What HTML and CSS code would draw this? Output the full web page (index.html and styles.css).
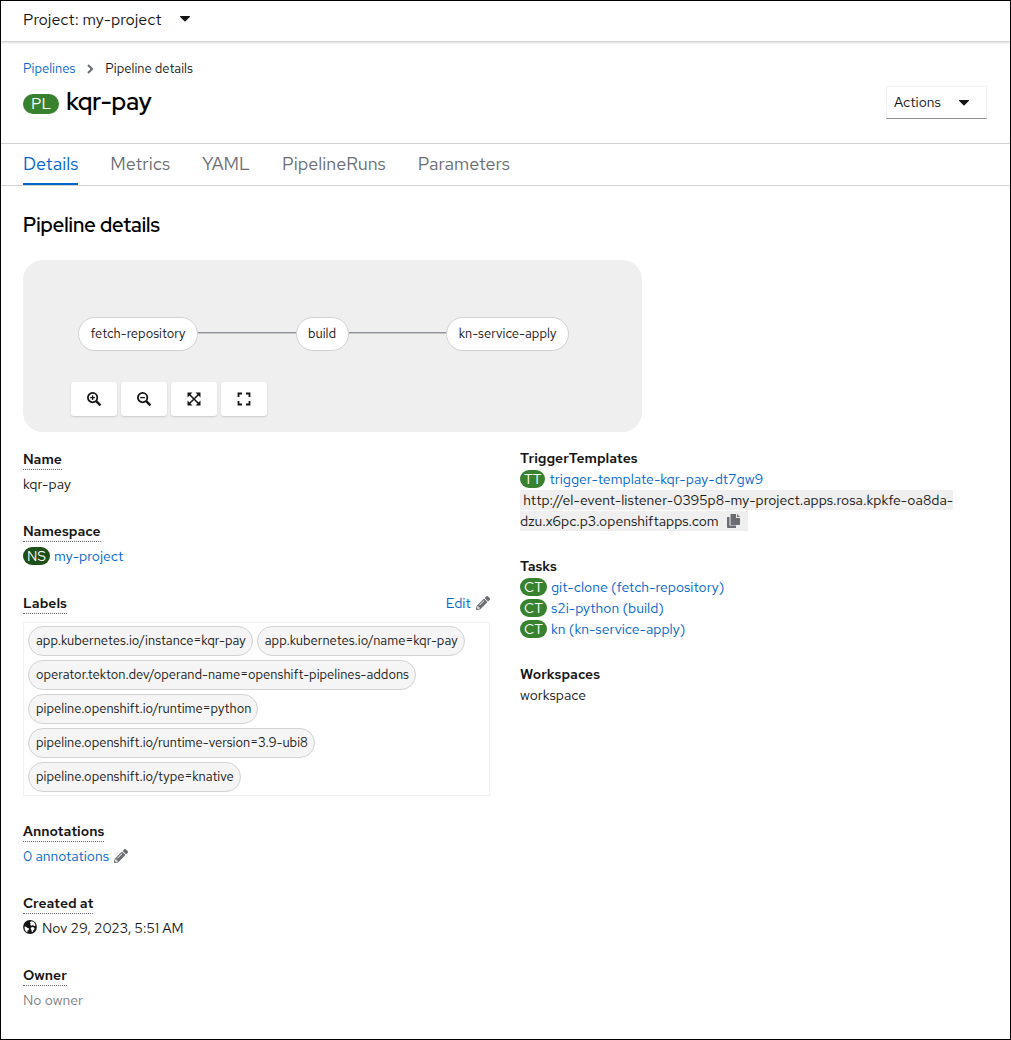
FILE: index.html
```html
<!DOCTYPE html>
<html lang="en">
<head>
  <meta charset="UTF-8">
  <meta name="viewport" content="width=device-width, initial-scale=1.0">
  <title>kqr-pay - Pipeline details</title>
  <link rel="stylesheet" href="styles.css">
</head>
<body>
  <!-- Shared icons -->
  <svg class="icon-defs" aria-hidden="true">
    <symbol id="caret" viewBox="0 0 10 6"><path d="M0.6 0h8.8c.6 0 .8.6.4 1L5.5 5.3c-.3.3-.7.3-1 0L.2 1C-.2.6 0 0 .6 0z"/></symbol>
    <symbol id="pencil" viewBox="0 0 512 512"><path d="M498 142l-47 47c-4 4-12 4-17 0L324 78c-5-5-5-12 0-17l46-46c19-19 49-19 68 0l60 60c19 18 19 49 0 67zM284 101L22 363 0 485c-3 16 11 30 28 27l121-21 263-263c5-4 5-12 0-17L301 101c-5-5-13-5-17 0zM124 340c-5-6-5-14 0-20l154-154c6-5 15-5 20 0s5 15 0 20L144 340c-6 5-14 5-20 0zm-36 84h48v36l-64 11-31-31 11-64h36z"/></symbol>
  </svg>

  <div class="page">
    <header class="project-bar">
      <button class="project-toggle">Project: my-project
        <svg class="caret"><use href="#caret"/></svg>
      </button>
    </header>

    <!-- Heading -->
    <div class="heading">
      <nav class="breadcrumb">
        <a href="#">Pipelines</a>
        <svg class="chevron" viewBox="0 0 6 10"><path d="M1 1l4 4-4 4"/></svg>
        <span>Pipeline details</span>
      </nav>
      <div class="title-row">
        <h1><span class="badge badge-lg">PL</span>kqr-pay</h1>
        <button class="actions">Actions <svg class="caret"><use href="#caret"/></svg></button>
      </div>
    </div>

    <nav class="tabs">
      <a class="active" href="#">Details</a>
      <a href="#">Metrics</a>
      <a href="#">YAML</a>
      <a href="#">PipelineRuns</a>
      <a href="#">Parameters</a>
    </nav>

    <main>
      <h2>Pipeline details</h2>

      <!-- Pipeline graph -->
      <div class="graph">
        <div class="nodes">
          <span class="node node-fetch">fetch-repository</span>
          <span class="edge"></span>
          <span class="node node-build">build</span>
          <span class="edge"></span>
          <span class="node node-apply">kn-service-apply</span>
        </div>
        <div class="toolbar">
          <button aria-label="Zoom in"><svg viewBox="0 0 14 14"><g fill="none" stroke="currentColor"><circle cx="5.6" cy="5.6" r="4.7" stroke-width="1.8"/><path d="M9.2 9.2l4.2 4.2" stroke-width="2.4"/><path d="M3.2 5.6h4.8M5.6 3.2v4.8" stroke-width="1.3"/></g></svg></button>
          <button aria-label="Zoom out"><svg viewBox="0 0 14 14"><g fill="none" stroke="currentColor"><circle cx="5.6" cy="5.6" r="4.7" stroke-width="1.8"/><path d="M9.2 9.2l4.2 4.2" stroke-width="2.4"/><path d="M3.2 5.6h4.8" stroke-width="1.3"/></g></svg></button>
          <button aria-label="Fit to screen"><svg viewBox="0 0 14 14"><path d="M.5 .5h5L.5 5.500zM13.500 .5v5L8.500 .5zM.5 13.500v-5l5 5zM13.500 13.500h-5l5-5z"/><path d="M2.500 2.500l9 9M11.500 2.500l-9 9" stroke="currentColor" stroke-width="1.500"/></svg></button>
          <button aria-label="Reset view"><svg viewBox="0 0 14 14"><path d="M1.500 5V1.500H5M9 1.500h3.500V5M12.500 9v3.500H9M5 12.500H1.500V9" fill="none" stroke="currentColor" stroke-width="1.800"/></svg></button>
        </div>
      </div>

      <div class="columns">
        <dl class="details">
          <dt><span>Name</span></dt>
          <dd>kqr-pay</dd>
          <dt><span>Namespace</span></dt>
          <dd><span class="badge badge-ns">NS</span><a href="#">my-project</a></dd>
          <dt><span>Labels</span><a class="edit" href="#">Edit <svg class="pencil"><use href="#pencil"/></svg></a></dt>
          <dd class="labels">
            <a href="#">app.kubernetes.io/instance=kqr-pay</a>
            <a href="#">app.kubernetes.io/name=kqr-pay</a>
            <a href="#">operator.tekton.dev/operand-name=openshift-pipelines-addons</a>
            <a href="#">pipeline.openshift.io/runtime=python</a>
            <a href="#">pipeline.openshift.io/runtime-version=3.9-ubi8</a>
            <a href="#">pipeline.openshift.io/type=knative</a>
          </dd>
          <dt><span>Annotations</span></dt>
          <dd><a href="#">0 annotations <svg class="pencil"><use href="#pencil"/></svg></a></dd>
          <dt><span>Created at</span></dt>
          <dd><svg class="globe" viewBox="0 0 14 14"><circle cx="7" cy="7" r="6.9"/><path fill="#fff" d="M6.800 2.200l1.800-1 2.200.9 1.300 1.900.3 1.900-1.400.2-1-1-1.300.6-1.600-.9.600-1.300zM1.500 6.600l1.500.2 1.600 1.200 1.500.6-.4 1.400-1.200.8-.2 1.400-1.400-.8-1.100-1.900zM8 7.600l1.800-.6 1.500.7.300 1.400-1.200 1.200-.8 1.600-1-.4-.2-1.700-.7-1z"/></svg>Nov 29, 2023, 5:51 AM</dd>
          <dt><span>Owner</span></dt>
          <dd class="muted">No owner</dd>
        </dl>

        <dl class="resources">
          <dt>TriggerTemplates</dt>
          <dd><span class="badge">TT</span><a href="#">trigger-template-kqr-pay-dt7gw9</a></dd>
          <dd><span class="url">&nbsp;http://el-event-listener-0395p8-my-project.apps.rosa.kpkfe-oa8da-<wbr>dzu.x6pc.p3.openshiftapps.com<button class="copy" aria-label="Copy to clipboard"><svg viewBox="0 0 14 14"><path d="M0 3h2.500v8.500H9V14H1c-.6 0-1-.4-1-1z"/><path d="M3.500 0H9v4h4v6c0 .6-.4 1-1 1H4.500c-.6 0-1-.4-1-1zM10 0l3 3h-3z"/></svg></button></span></dd>
          <dt>Tasks</dt>
          <dd><span class="badge">CT</span><a href="#">git-clone (fetch-repository)</a></dd>
          <dd><span class="badge">CT</span><a href="#">s2i-python (build)</a></dd>
          <dd><span class="badge">CT</span><a href="#">kn (kn-service-apply)</a></dd>
          <dt>Workspaces</dt>
          <dd>workspace</dd>
        </dl>
      </div>
    </main>
  </div>
</body>
</html>
```
FILE: styles.css
```css
* {
  box-sizing: border-box;
}

body {
  margin: 0;
  font-family: "Red Hat Text", Roboto, sans-serif;
  font-size: 14px;
  line-height: 21px;
  color: #151515;
  background: #fff;
}

a {
  color: #06c;
  text-decoration: none;
}

button {
  font: inherit;
  color: inherit;
  background: #fff;
  border: none;
  padding: 0;
  cursor: pointer;
}

svg {
  fill: currentColor;
}

.icon-defs {
  display: none;
}

.page {
  min-height: 100vh;
  border: 1px solid #000;
}

.caret {
  width: 10px;
  height: 6px;
}

/* Project bar */
.project-bar {
  height: 41px;
  padding: 0 22px 4px;
  display: flex;
  align-items: center;
  border-bottom: 1px solid #d2d2d2;
  box-shadow: 0 1px 2px rgba(0, 0, 0, 0.12);
}

.project-toggle {
  display: flex;
  align-items: center;
  gap: 18px;
  font-size: 16px;
}

/* Heading */
.heading {
  padding: 16px 23px 24px 22px;
}

.breadcrumb {
  display: flex;
  align-items: center;
  gap: 12px;
  font-size: 13px;
}

.chevron {
  width: 6px;
  height: 10px;
  fill: none;
  stroke: #6a6e73;
  stroke-width: 2;
}

.title-row {
  display: flex;
  justify-content: space-between;
  align-items: center;
  margin-top: 7px;
}

h1,
h2 {
  margin: 0;
  font-family: "Red Hat Display", "Red Hat Text", Roboto, sans-serif;
  font-weight: 600;
  color: #000;
}

h1 {
  display: flex;
  align-items: center;
  gap: 7px;
  font-size: 24px;
  line-height: 30px;
  padding-bottom: 2px;
}

.actions {
  width: 101px;
  height: 33px;
  padding: 0 17px 0 7px;
  display: flex;
  justify-content: space-between;
  align-items: center;
  border: 1px solid #f0f0f0;
  border-bottom-color: #8a8d90;
}

.badge {
  display: inline-block;
  margin-right: 4px;
  padding: 0 4px;
  border-radius: 20px;
  background: #38812f;
  color: #fff;
  line-height: 18px;
}

.badge-lg {
  margin: 4px 0 0;
  padding: 0 8px;
  font-family: "Red Hat Text", Roboto, sans-serif;
  font-size: 16px;
  font-weight: 400;
  line-height: 20px;
}

.badge-ns {
  background: #1e4f18;
}

/* Tabs */
.tabs {
  display: flex;
  gap: 32px;
  padding: 0 22px;
  border-top: 1px solid #d2d2d2;
  border-bottom: 1px solid #d2d2d2;
  font-size: 18px;
}

.tabs a {
  height: 41px;
  line-height: 39px;
  color: #6a6e73;
}

.tabs .active {
  color: #06c;
  border-bottom: 2px solid #06c;
}

main {
  padding: 24px 23px 0 22px;
}

h2 {
  margin-bottom: 20px;
  font-size: 20px;
  line-height: 30px;
}

/* Pipeline graph */
.graph {
  max-width: 619px;
  padding: 57px 48px 16px;
  border-radius: 20px;
  background: #efefef;
}

.nodes {
  display: flex;
  align-items: center;
  padding: 0 25px 0 7px;
}

.node {
  height: 34px;
  border: 1px solid #d2d2d2;
  border-radius: 17px;
  background: #fff;
  font-size: 13px;
  line-height: 31px;
  text-align: center;
}

.node-fetch {
  width: 120px;
}

.node-build {
  width: 53px;
}

.node-apply {
  width: 123px;
}

.edge {
  flex: 1;
  height: 2px;
  margin-bottom: 2px;
  border-top: 1px solid #8f9299;
  background: #c4c5c8;
}

.toolbar {
  display: flex;
  gap: 4px;
  margin-top: 31px;
}

.toolbar button {
  width: 46px;
  height: 34px;
  border-radius: 3px;
  box-shadow: 0 1px 2px rgba(0, 0, 0, 0.16);
}

.toolbar svg {
  width: 14px;
  height: 14px;
  vertical-align: -2px;
}

/* Detail lists */
.columns {
  display: grid;
  grid-template-columns: 1fr 1fr;
  gap: 30px;
  margin-top: 16px;
}

dl,
dd {
  margin: 0;
}

dt {
  font-weight: 600;
}

.details dt {
  display: flex;
  justify-content: space-between;
  margin: 1px 0 4px;
}

.details dt span {
  border-bottom: 1px dotted #6a6e73;
  line-height: 20px;
}

.details dd {
  margin-bottom: 26px;
}

.edit {
  font-weight: 400;
}

.pencil {
  width: 14px;
  height: 14px;
  margin-left: 2px;
  color: #6a6e73;
  vertical-align: -2px;
}

.details .labels {
  display: flex;
  flex-wrap: wrap;
  gap: 4px;
  margin: 8px 0 25px;
  padding: 3px 4px;
  border: 1px solid #f0f0f0;
}

.labels a {
  height: 30px;
  padding: 0 6px 0 7px;
  border: 1px solid #d2d2d2;
  border-radius: 15px;
  background: #f5f5f5;
  color: #151515;
  font-size: 13px;
  line-height: 28px;
}

.globe {
  width: 14px;
  height: 14px;
  margin-right: 5px;
  vertical-align: -1px;
}

.muted {
  color: #7a7d82;
}

.resources dd + dt {
  margin-top: 24px;
}

.url {
  padding: 1px 0;
  background: #efefef;
}

.copy {
  padding: 0 7px 0 8px;
  background: none;
  color: #6a6e73;
  line-height: 16px;
}

.copy svg {
  width: 14px;
  height: 14px;
  vertical-align: -2px;
}
```
